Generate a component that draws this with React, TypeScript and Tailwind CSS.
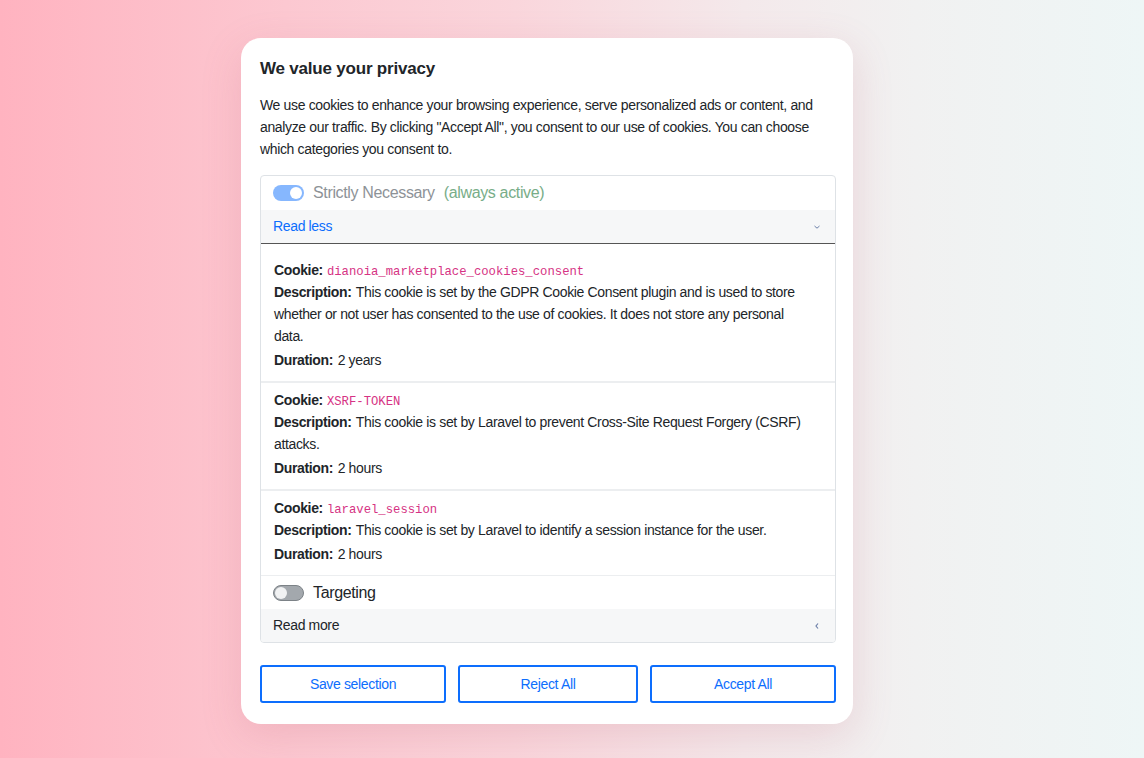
const cookies = [
  {
    name: "dianoia_marketplace_cookies_consent",
    description:
      "This cookie is set by the GDPR Cookie Consent plugin and is used to store whether or not user has consented to the use of cookies. It does not store any personal data.",
    duration: "2 years",
  },
  {
    name: "XSRF-TOKEN",
    description: "This cookie is set by Laravel to prevent Cross-Site Request Forgery (CSRF) attacks.",
    duration: "2 hours",
  },
  {
    name: "laravel_session",
    description: "This cookie is set by Laravel to identify a session instance for the user.",
    duration: "2 hours",
  },
];

function Toggle({ on }: { on: boolean }) {
  return on ? (
    <span className="flex items-center justify-end w-[31px] h-[16px] rounded-full bg-[#86b7fe] px-[2px]">
      <span className="w-[12px] h-[12px] rounded-full bg-white" />
    </span>
  ) : (
    <span className="flex items-center w-[31px] h-[16px] rounded-full bg-[#a3a8ad] border border-[#7c8287] px-[1px]">
      <span className="w-[12px] h-[12px] rounded-full bg-[#f1f2f3]" />
    </span>
  );
}

export default function App() {
  return (
    <div
      className="h-[758px] w-full flex items-center justify-center pr-[50px] pt-[4px] bg-[linear-gradient(90deg,#ffb3c0_0%,#fcc8d1_25%,#fad6dc_45%,#f4e9eb_65%,#f1f1f1_80%,#eef6f6_100%)]"
      style={{ fontFamily: '"Liberation Sans", Arial, sans-serif' }}
    >
      <div className="w-[612px] bg-white rounded-[20px] pl-[19px] pr-[17px] pt-[17px] pb-[21px] shadow-[0_12px_40px_rgba(190,90,110,0.18)] text-[#212529] tracking-[-0.35px]">
        <h1 className="text-[17px] leading-[27px] font-bold mb-3 tracking-[-0.2px]">We value your privacy</h1>
        <p className="text-[14px] leading-[22px] mb-[15px]">
          We use cookies to enhance your browsing experience, serve personalized ads or content, and
          analyze our traffic. By clicking "Accept All", you consent to our use of cookies. You can choose
          which categories you consent to.
        </p>

        <div className="border border-[#dee2e6] rounded-[4px] overflow-hidden">
          <div className="flex items-center gap-[9px] px-3 h-[34px]">
            <Toggle on />
            <span className="text-[16px] text-[#8d9297]">Strictly Necessary</span>
            <span className="text-[16px] text-[#78ad88]">(always active)</span>
          </div>
          <button
            type="button"
            className="w-full flex items-center justify-between h-[34px] px-3 bg-[#f6f7f8] border-b border-[#555] text-[14px] text-[#0d6efd]"
          >
            <span>Read less</span>
            <svg width="8" height="6" viewBox="0 0 8 6" className="mr-[2px]">
              <path d="M1.5 2 L4 4.2 L6.5 2" fill="none" stroke="#6b7fa8" strokeWidth="1" />
            </svg>
          </button>

          <div className="pt-[9px]">
            {cookies.map((c) => (
              <div
                key={c.name}
                className="pl-[13px] pr-[26px] pt-[6px] pb-[10px] border-b-2 border-[#eceef0] last:border-b text-[14px] leading-[22px]"
              >
                <div className="h-[22px] flex items-baseline gap-[4px]">
                  <b>Cookie:</b>
                  <code
                    className="text-[12.25px] leading-none tracking-normal text-[#d63384]"
                    style={{ fontFamily: '"Liberation Mono", "Courier New", monospace' }}
                  >
                    {c.name}
                  </code>
                </div>
                <div>
                  <b className="mr-[1px]">Description:</b> {c.description}
                </div>
                <div className="mt-[2px]">
                  <b className="mr-[1px]">Duration:</b> {c.duration}
                </div>
              </div>
            ))}
          </div>

          <div className="flex items-center gap-[9px] px-3 h-[33px]">
            <Toggle on={false} />
            <span className="text-[16px] text-[#212529]">Targeting</span>
          </div>
          <button
            type="button"
            className="w-full flex items-center justify-between h-[33px] px-3 bg-[#f6f7f8] text-[14px] text-[#212529]"
          >
            <span>Read more</span>
            <svg width="6" height="8" viewBox="0 0 6 8" className="mr-[3px]">
              <path d="M4 1.5 L2 4 L4 6.5" fill="none" stroke="#6b7fa8" strokeWidth="1.2" />
            </svg>
          </button>
        </div>

        <div className="flex gap-3 mt-[22px]">
          <button
            type="button"
            className="w-[186px] h-[38px] border-2 border-[#0d6efd] rounded-[3px] text-[14px] text-[#0d6efd]"
          >
            Save selection
          </button>
          <button
            type="button"
            className="w-[180px] h-[38px] border-2 border-[#0d6efd] rounded-[3px] text-[14px] text-[#0d6efd]"
          >
            Reject All
          </button>
          <button
            type="button"
            className="w-[186px] h-[38px] border-2 border-[#0d6efd] rounded-[3px] text-[14px] text-[#0d6efd]"
          >
            Accept All
          </button>
        </div>
      </div>
    </div>
  );
}
